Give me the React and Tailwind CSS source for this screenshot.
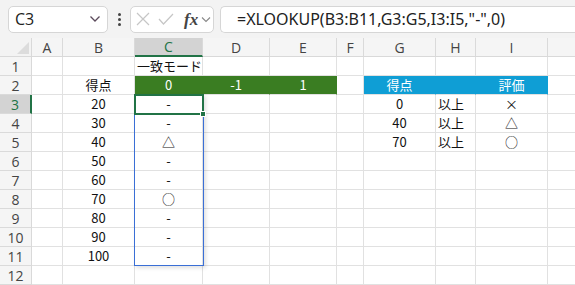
import React from 'react';

const COLS = [
  { key: '#', w: 32 },
  { key: 'A', w: 31 },
  { key: 'B', w: 72 },
  { key: 'C', w: 68 },
  { key: 'D', w: 67 },
  { key: 'E', w: 67 },
  { key: 'F', w: 27 },
  { key: 'G', w: 72 },
  { key: 'H', w: 40 },
  { key: 'I', w: 72 },
  { key: 'J', w: 72, hideLabel: true },
];

const GREEN = 'bg-[#3a7d22] text-white border-r-[#3a7d22]';
const BLUE = 'bg-[#0f9ed5] text-white border-r-[#0f9ed5]';

// cell contents by row -> column
const CELLS = {
  1: { C: { t: '一致モード', align: 'left' } },
  2: {
    B: { t: '得点' },
    C: { t: '0', cls: GREEN },
    D: { t: '-1', cls: GREEN },
    E: { t: '1', cls: GREEN },
    G: { t: '得点', cls: BLUE },
    H: { t: '', cls: BLUE },
    I: { t: '評価', cls: BLUE },
  },
  3: { G: { t: '0' }, H: { t: '以上', align: 'left' }, I: { t: '×' } },
  4: { G: { t: '40' }, H: { t: '以上', align: 'left' }, I: { t: '△' } },
  5: { G: { t: '70' }, H: { t: '以上', align: 'left' }, I: { t: '○' } },
};

const SCORES = [20, 30, 40, 50, 60, 70, 80, 90, 100];
SCORES.forEach((s, i) => {
  const r = i + 3;
  CELLS[r] = CELLS[r] || {};
  CELLS[r].B = { t: String(s) };
  CELLS[r].C = { t: r === 5 ? '△' : r === 8 ? '○' : '-' };
});

const cellFont = { fontFamily: '"Noto Sans CJK JP", "Noto Sans", sans-serif' };

function NameBox() {
  return (
    <div className="w-[100px] h-[27px] shrink-0 bg-white border border-[#d6d6d6] rounded-[5px] flex items-center justify-between pl-[6px] pr-[6px]">
      <span className="text-[16px] text-[#222]">C3</span>
      <svg width="12" height="8" viewBox="0 0 12 8" fill="none" stroke="#5b4a5b" strokeWidth="1.3">
        <path d="M1.5 1.5 L6 6 L10.5 1.5" />
      </svg>
    </div>
  );
}

function FxBox() {
  return (
    <div className="w-[84px] h-[27px] shrink-0 bg-white border border-[#d6d6d6] rounded-[5px] flex items-center pl-[5px] gap-[8px]">
      <svg width="14" height="14" viewBox="0 0 14 14" stroke="#c6c6c6" strokeWidth="1.2" fill="none">
        <path d="M1 1 L13 13 M13 1 L1 13" />
      </svg>
      <svg width="16" height="12" viewBox="0 0 16 12" stroke="#c6c6c6" strokeWidth="1.2" fill="none">
        <path d="M1 6 L5.5 11 L15 1" />
      </svg>
      <span className="text-[17px] italic text-[#444] font-bold leading-none ml-[2px]" style={{ fontFamily: '"Liberation Serif", serif' }}>fx</span>
      <svg width="10" height="7" viewBox="0 0 10 7" fill="none" stroke="#888" strokeWidth="1.1" className="-ml-[5px]">
        <path d="M1 1.5 L5 5.5 L9 1.5" />
      </svg>
    </div>
  );
}

function HeaderRow() {
  return (
    <div className="flex h-[19px]">
      {COLS.map((c) => {
        if (c.key === '#') {
          return (
            <div key="corner" className="relative shrink-0 border-r border-b border-[#d9d9d9] bg-[#f3f3f3]" style={{ width: c.w }}>
              <div className="absolute right-[2px] bottom-[2px] w-0 h-0 border-l-[12px] border-l-transparent border-b-[12px] border-b-[#dcdcdc]" />
            </div>
          );
        }
        const sel = c.key === 'C';
        return (
          <div
            key={c.key}
            className={`shrink-0 flex items-center justify-center text-[14px] border-r border-[#dadada] ${sel ? 'bg-[#d3d3d3] text-[#217346] border-b-2 border-b-[#217346]' : 'bg-[#f5f5f5] text-[#444] border-b border-b-[#d9d9d9]'}`}
            style={{ width: c.w }}
          >
            {c.hideLabel ? '' : c.key}
          </div>
        );
      })}
    </div>
  );
}

function Row({ r }) {
  const data = CELLS[r] || {};
  return (
    <div className="flex h-[19px]">
      {COLS.map((c) => {
        if (c.key === '#') {
          const sel = r === 3;
          return (
            <div
              key="rh"
              className={`shrink-0 flex items-center justify-center text-[14px] border-b border-b-[#dadada] ${sel ? 'bg-[#d3d3d3] text-[#217346] border-r-2 border-r-[#217346]' : 'bg-[#f5f5f5] text-[#444] border-r border-r-[#d9d9d9]'}`}
              style={{ width: c.w }}
            >
              {r}
            </div>
          );
        }
        const cell = data[c.key];
        const align = cell && cell.align === 'left' ? 'justify-start pl-[2px]' : 'justify-center';
        return (
          <div
            key={c.key}
            className={`shrink-0 flex items-center whitespace-nowrap text-[13px] border-r border-b border-[#e1e1e1] ${align} ${cell && cell.cls ? cell.cls : 'bg-white text-[#111]'}`}
            style={{ width: c.w, ...cellFont }}
          >
            {cell ? cell.t : ''}
          </div>
        );
      })}
    </div>
  );
}

export default function App() {
  const rows = Array.from({ length: 12 }, (_, i) => i + 1);
  return (
    <div className="w-[575px] h-[285px] overflow-hidden bg-[#f3f3f3] flex flex-col" style={{ fontFamily: '"Open Sans", "Noto Sans", sans-serif' }}>
      {/* formula bar */}
      <div className="h-[38px] shrink-0 flex items-center pl-[8px]">
        <NameBox />
        <div className="w-[22px] shrink-0 flex flex-col items-center gap-[2px]">
          <span className="w-[3px] h-[3px] rounded-full bg-[#444]" />
          <span className="w-[3px] h-[3px] rounded-full bg-[#444]" />
          <span className="w-[3px] h-[3px] rounded-full bg-[#444]" />
        </div>
        <FxBox />
        <div className="ml-[6px] flex-1 h-[27px] bg-white border border-[#d6d6d6] border-r-0 rounded-l-[5px] flex items-center pl-[16px] text-[16px] text-[#222] whitespace-nowrap" style={{ fontFamily: '"Noto Sans", sans-serif' }}>
          =XLOOKUP(B3:B11,G3:G5,I3:I5,"-",0)
        </div>
      </div>

      {/* sheet */}
      <div className="relative flex-1 overflow-hidden">
        <HeaderRow />
        {rows.map((r) => (
          <Row key={r} r={r} />
        ))}

        {/* formula reference range C3:C11 */}
        <div className="absolute left-[134px] top-[56px] w-[70px] h-[172px] border-[1.5px] border-[#3a6fd6] shadow-[2px_2px_4px_rgba(0,0,0,0.12)] pointer-events-none" />
        {/* active cell C3 */}
        <div className="absolute left-[134px] top-[56px] w-[70px] h-[21px] border-2 border-[#217346] pointer-events-none" />
        <div className="absolute left-[200px] top-[73px] w-[6px] h-[6px] bg-[#217346] border border-white pointer-events-none" />
      </div>
    </div>
  );
}
